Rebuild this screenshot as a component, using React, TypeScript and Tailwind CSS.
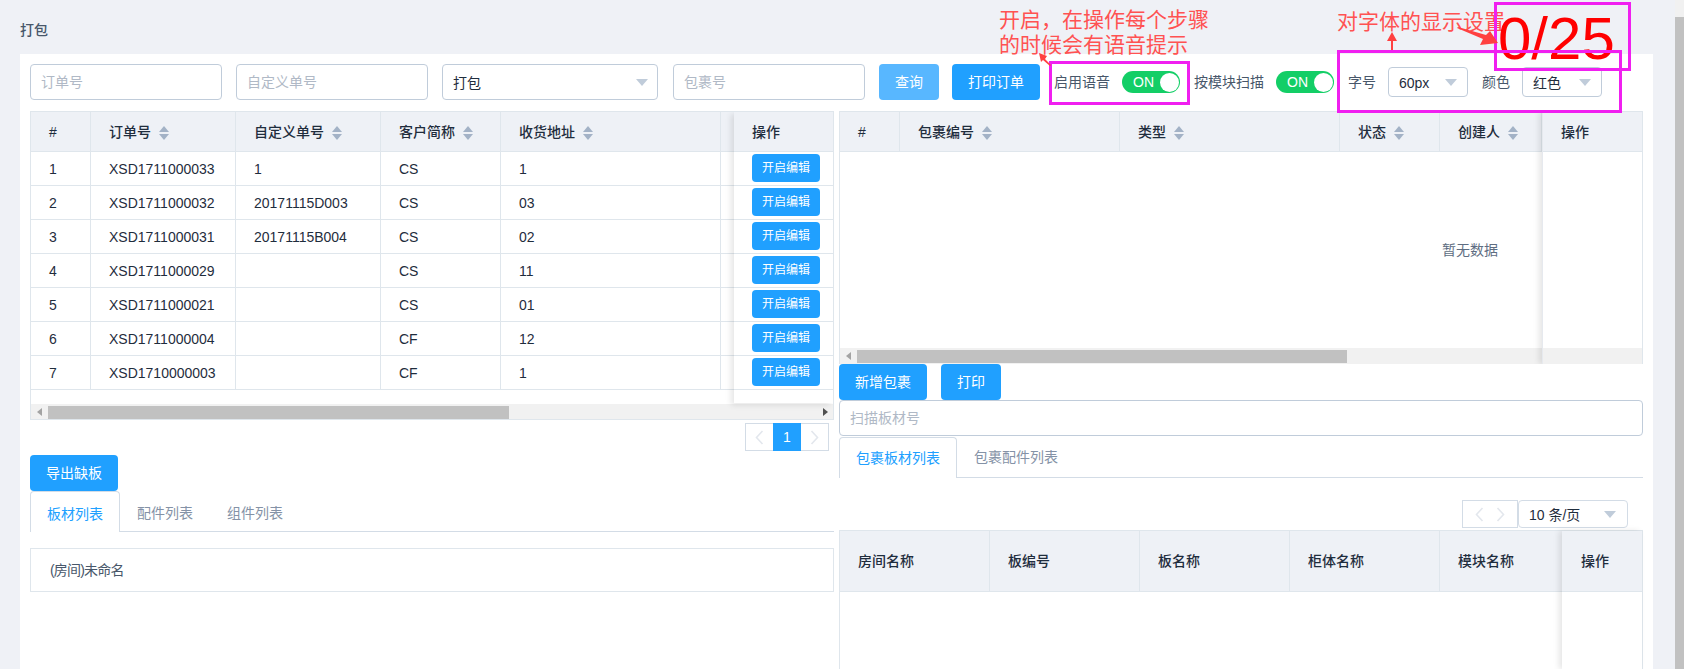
import React from "react";

const orders = [
  { no: 1, code: "XSD1711000033", custom: "1", customer: "CS", addr: "1" },
  { no: 2, code: "XSD1711000032", custom: "20171115D003", customer: "CS", addr: "03" },
  { no: 3, code: "XSD1711000031", custom: "20171115B004", customer: "CS", addr: "02" },
  { no: 4, code: "XSD1711000029", custom: "", customer: "CS", addr: "11" },
  { no: 5, code: "XSD1711000021", custom: "", customer: "CS", addr: "01" },
  { no: 6, code: "XSD1711000004", custom: "", customer: "CF", addr: "12" },
  { no: 7, code: "XSD1710000003", custom: "", customer: "CF", addr: "1" },
];

function Sort() {
  return (
    <span className="inline-flex flex-col gap-[2px] ml-2 align-middle">
      <span className="w-0 h-0 border-x-[5px] border-x-transparent border-b-[6px] border-b-[#a3b2c6]" />
      <span className="w-0 h-0 border-x-[5px] border-x-transparent border-t-[6px] border-t-[#a3b2c6]" />
    </span>
  );
}

function Caret() {
  return <span className="w-0 h-0 border-x-[6px] border-x-transparent border-t-[7px] border-t-[#c0ccda]" />;
}

function Input({ placeholder, className }: { placeholder: string; className: string }) {
  return (
    <input
      placeholder={placeholder}
      className={`h-[36px] rounded border border-[#c0ccda] bg-white px-[10px] text-sm outline-none placeholder:text-[#b0b9c6] ${className}`}
    />
  );
}

function Select({ label, className }: { label: string; className: string }) {
  return (
    <div className={`flex items-center justify-between rounded border border-[#c0ccda] bg-white pl-[10px] text-sm text-[#1f2d3d] ${className}`}>
      <span className="pt-[1px]">{label}</span>
      <Caret />
    </div>
  );
}

function Btn({ label, className }: { label: string; className: string }) {
  return (
    <button className={`h-[36px] shrink-0 rounded text-sm text-white ${className}`}>{label}</button>
  );
}

function Switch({ className }: { className: string }) {
  return (
    <div className={`flex h-[22px] w-[58px] shrink-0 items-center justify-between rounded-full bg-[#13ce66] pl-[11px] pr-[1px] text-sm text-white ${className}`}>
      <span>ON</span>
      <span className="h-[19px] w-[19px] rounded-full bg-white" />
    </div>
  );
}

function Chevron({ right }: { right?: boolean }) {
  return (
    <svg width="9" height="15" viewBox="0 0 9 15" fill="none" stroke="#e3e7ed" strokeWidth="1.6">
      <polyline points={right ? "1.5,1 7.5,7.5 1.5,14" : "7.5,1 1.5,7.5 7.5,14"} />
    </svg>
  );
}

function HScroll({ thumb, start }: { thumb: string; start: string }) {
  return (
    <div className="flex h-[16px] items-center bg-[#f1f1f1] text-[#505050]">
      <span className="ml-[6px] w-0 h-0 border-y-[4px] border-y-transparent border-r-[5px] border-r-[#a3a3a3]" />
      <div className={`${start} ${thumb} h-[13px] bg-[#c1c1c1]`} />
      <span className="ml-auto mr-[5px] w-0 h-0 border-y-[4px] border-y-transparent border-l-[5px] border-l-[#505050]" />
    </div>
  );
}

function Th({ children, className = "" }: { children?: React.ReactNode; className?: string }) {
  return (
    <th className={`border-r border-b border-[#dfe6ec] bg-[#eef1f6] pl-[18px] text-left text-sm font-medium text-[#1f2d3d] ${className}`}>
      {children}
    </th>
  );
}

function Td({ children }: { children?: React.ReactNode }) {
  return <td className="border-r border-b border-[#dfe6ec] pl-[18px] text-sm text-[#1f2d3d]">{children}</td>;
}

function FixedCol({ children, className }: { children: React.ReactNode; className: string }) {
  return (
    <div className={`absolute right-0 top-0 bg-white shadow-[-3px_0_6px_rgba(0,0,0,0.1)] ${className}`}>{children}</div>
  );
}

function OrderTable() {
  return (
    <div className="relative h-[309px] overflow-hidden border border-[#dfe6ec]">
      <table className="w-[900px] table-fixed border-separate border-spacing-0">
        <colgroup>
          <col className="w-[60px]" />
          <col className="w-[145px]" />
          <col className="w-[145px]" />
          <col className="w-[120px]" />
          <col className="w-[220px]" />
          <col />
        </colgroup>
        <thead>
          <tr className="h-[40px]">
            <Th>#</Th>
            <Th>订单号<Sort /></Th>
            <Th>自定义单号<Sort /></Th>
            <Th>客户简称<Sort /></Th>
            <Th>收货地址<Sort /></Th>
            <Th />
          </tr>
        </thead>
        <tbody>
          {orders.map((o) => (
            <tr key={o.no} className="h-[34px]">
              <Td>{o.no}</Td>
              <Td>{o.code}</Td>
              <Td>{o.custom}</Td>
              <Td>{o.customer}</Td>
              <Td>{o.addr}</Td>
              <Td />
            </tr>
          ))}
        </tbody>
      </table>
      <div className="mt-[14px]">
        <HScroll start="ml-[6px]" thumb="w-[461px]" />
      </div>
      <FixedCol className="h-[291px] w-[99px] shadow-[-3px_2px_6px_rgba(0,0,0,0.1)]">
        <div className="flex h-[40px] items-center border-b border-[#dfe6ec] bg-[#eef1f6] pl-[18px] text-sm font-medium text-[#1f2d3d]">操作</div>
        {orders.map((o) => (
          <div key={o.no} className="flex h-[34px] items-start border-b border-[#dfe6ec] pl-[18px] pt-[2px]">
            <button className="h-[28px] w-[68px] rounded bg-[#20a0ff] text-xs text-white">开启编辑</button>
          </div>
        ))}
      </FixedCol>
    </div>
  );
}

function PackageTable() {
  return (
    <div className="relative h-[253px] overflow-hidden border-x border-t border-[#dfe6ec]">
      <table className="w-[1000px] table-fixed border-separate border-spacing-0">
        <colgroup>
          <col className="w-[60px]" />
          <col className="w-[220px]" />
          <col className="w-[220px]" />
          <col className="w-[100px]" />
          <col className="w-[102px]" />
          <col />
        </colgroup>
        <thead>
          <tr className="h-[40px]">
            <Th>#</Th>
            <Th>包裹编号<Sort /></Th>
            <Th>类型<Sort /></Th>
            <Th>状态<Sort /></Th>
            <Th>创建人<Sort /></Th>
            <Th />
          </tr>
        </thead>
      </table>
      <div className="flex h-[196px] items-center justify-center pl-[458px] text-sm text-[#5e6d82]">暂无数据</div>
      <HScroll start="ml-[6px]" thumb="w-[490px]" />
      <FixedCol className="h-[252px] w-[100px] border-l border-[#e6e9ee]">
        <div className="flex h-[40px] items-center border-b border-[#dfe6ec] bg-[#eef1f6] pl-[18px] text-sm font-medium text-[#1f2d3d]">操作</div>
        <div className="h-[196px]" />
        <div className="h-[16px] bg-[#f1f1f1]" />
      </FixedCol>
    </div>
  );
}

function Tabs({ items, activeWidth, textPad = "" }: { items: string[]; activeWidth: string; textPad?: string }) {
  return (
    <div className="flex h-[41px] border-b border-[#d3dce6] text-sm">
      <div className={`-mb-px flex items-center justify-center rounded-t border-x border-t border-[#d3dce6] bg-white text-[#20a0ff] ${activeWidth} ${textPad}`}>
        {items[0]}
      </div>
      {items.slice(1).map((t) => (
        <div key={t} className={`flex items-center px-[17px] text-[#8492a6] ${textPad}`}>{t}</div>
      ))}
    </div>
  );
}

function PartsTable() {
  const heads = ["房间名称", "板编号", "板名称", "柜体名称", "模块名称"];
  return (
    <div className="relative flex-1 border-x border-t border-[#dfe6ec]">
      <div className="flex h-[61px] border-b border-[#dfe6ec] bg-[#eef1f6] text-sm font-medium text-[#1f2d3d]">
        {heads.map((h) => (
          <div key={h} className="flex w-[150px] shrink-0 items-center border-r border-[#dfe6ec] pl-[18px]">{h}</div>
        ))}
      </div>
      <FixedCol className="bottom-0 w-[80px]">
        <div className="flex h-[61px] items-center border-b border-[#dfe6ec] bg-[#eef1f6] pl-[19px] text-sm font-medium text-[#1f2d3d]">操作</div>
      </FixedCol>
    </div>
  );
}

function Annotations() {
  return (
    <>
      <div className="absolute left-[999px] top-[7px] text-[21px] leading-[25px] text-[#ff5252]">
        开启，在操作每个步骤<br />的时候会有语音提示
      </div>
      <div className="absolute left-[1337px] top-[10px] text-[21px] leading-[24px] text-[#ff5252]">对字体的显示设置</div>
      <div className="absolute left-[1498px] top-[4px] text-[60px] leading-[69px] text-[#ff0000]">0/25</div>
      <div className="absolute left-[1049px] top-[61px] h-[44px] w-[141px] border-[3px] border-[#f01ff0]" />
      <div className="absolute left-[1337px] top-[50px] h-[63px] w-[285px] border-[3px] border-[#f01ff0]" />
      <div className="absolute left-[1494px] top-[2px] h-[69px] w-[137px] border-[3px] border-[#f01ff0]" />
      <svg className="absolute left-0 top-0 pointer-events-none" width="1684" height="120" fill="#ff4040">
        <polygon points="1039,53 1047,56 1045,59 1051,65 1050,66 1043,60 1041,62" />
        <polygon points="1392,32 1397,41 1393,41 1393,50 1391,50 1391,41 1387,41" />
        <polygon points="1498,43 1480,45 1483,39 1457,28 1458,27 1486,35 1490,31" />
      </svg>
    </>
  );
}

export default function App() {
  return (
    <div className="relative flex h-[669px] w-full overflow-hidden bg-[#eff1f6] text-[#1f2d3d] [font-family:'Liberation_Sans','Noto_Sans_CJK_SC',sans-serif]">
      <div className="flex min-w-0 flex-1 flex-col pl-[20px] pr-[22px]">
        <div className="flex h-[54px] shrink-0 items-end pb-[14px] text-sm font-medium text-[#48576a]">打包</div>
        <div className="flex flex-1 flex-col bg-white px-[10px] pt-[10px]">
          <div className="mb-[11px] flex h-[36px] items-center text-sm text-[#48576a]">
            <Input placeholder="订单号" className="w-[192px]" />
            <Input placeholder="自定义单号" className="ml-[14px] w-[192px]" />
            <Select label="打包" className="ml-[14px] h-[36px] w-[216px] pr-[9px]" />
            <Input placeholder="包裹号" className="ml-[15px] w-[192px]" />
            <Btn label="查询" className="ml-[14px] w-[60px] bg-[#58b7ff]" />
            <Btn label="打印订单" className="ml-[13px] w-[88px] bg-[#20a0ff]" />
            <span className="ml-[14px] shrink-0">启用语音</span>
            <Switch className="ml-[12px]" />
            <span className="ml-[14px] shrink-0">按模块扫描</span>
            <Switch className="ml-[12px]" />
            <span className="ml-[14px] shrink-0">字号</span>
            <Select label="60px" className="ml-[12px] h-[30px] w-[80px] pr-[10px]" />
            <span className="ml-[14px] shrink-0">颜色</span>
            <Select label="红色" className="ml-[12px] h-[30px] w-[80px] pr-[10px]" />
          </div>
          <div className="flex min-h-0 flex-1 gap-[5px]">
            <div className="w-[804px] shrink-0">
              <OrderTable />
              <div className="mt-[3px] flex justify-end pr-[5px]">
                <div className="flex h-[28px] items-center border border-[#d3dce6]">
                  <span className="flex w-[27px] justify-center"><Chevron /></span>
                  <span className="flex h-[28px] w-[28px] items-center justify-center bg-[#20a0ff] text-sm font-medium text-white">1</span>
                  <span className="flex w-[27px] justify-center"><Chevron right /></span>
                </div>
              </div>
              <Btn label="导出缺板" className="mt-[4px] block w-[88px] bg-[#20a0ff]" />
              <Tabs items={["板材列表", "配件列表", "组件列表"]} activeWidth="w-[90px]" textPad="pt-[3px]" />
              <div className="mt-[16px] flex h-[44px] items-center border border-[#dfe6ec] pl-[19px] text-sm tracking-[-0.8px] text-[#48576a]">(房间)未命名</div>
            </div>
            <div className="flex min-w-0 flex-1 flex-col">
              <PackageTable />
              <div className="flex gap-[14px]">
                <Btn label="新增包裹" className="w-[88px] bg-[#20a0ff]" />
                <Btn label="打印" className="w-[60px] bg-[#20a0ff]" />
              </div>
              <Input placeholder="扫描板材号" className="w-full" />
              <div className="mt-[1px]">
                <Tabs items={["包裹板材列表", "包裹配件列表"]} activeWidth="w-[118px]" />
              </div>
              <div className="mt-[22px] mb-[2px] flex justify-end pr-[15px]">
                <div className="flex h-[28px] w-[56px] items-center justify-around border border-[#d3dce6] px-[6px]">
                  <Chevron />
                  <Chevron right />
                </div>
                <Select label="10 条/页" className="h-[28px] w-[110px] border-[#d3dce6] pr-[11px]" />
              </div>
              <PartsTable />
            </div>
          </div>
        </div>
      </div>
      <div className="flex w-[9px] shrink-0 flex-col bg-[#f1f1f1]">
        <div className="mt-[17px] flex-1 bg-[#c1c1c1]" />
      </div>
      <Annotations />
    </div>
  );
}
